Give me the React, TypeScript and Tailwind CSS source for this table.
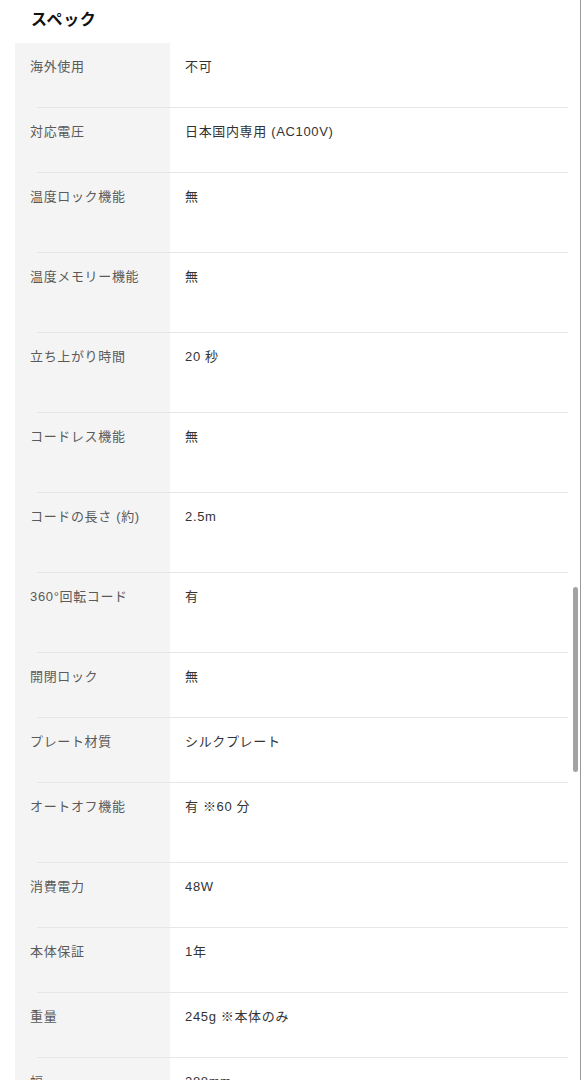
const specs: { label: string; value: string; tall?: boolean }[] = [
  { label: "海外使用", value: "不可" },
  { label: "対応電圧", value: "日本国内専用 (AC100V)" },
  { label: "温度ロック機能", value: "無", tall: true },
  { label: "温度メモリー機能", value: "無", tall: true },
  { label: "立ち上がり時間", value: "20 秒", tall: true },
  { label: "コードレス機能", value: "無", tall: true },
  { label: "コードの長さ (約)", value: "2.5m", tall: true },
  { label: "360°回転コード", value: "有", tall: true },
  { label: "開閉ロック", value: "無" },
  { label: "プレート材質", value: "シルクプレート" },
  { label: "オートオフ機能", value: "有 ※60 分", tall: true },
  { label: "消費電力", value: "48W" },
  { label: "本体保証", value: "1年" },
  { label: "重量", value: "245g ※本体のみ" },
  { label: "幅", value: "288mm" },
];

export default function App() {
  return (
    <div
      className="relative w-[581px] h-[1080px] overflow-hidden bg-white border-r border-[#9a9a9a]"
      style={{ fontFamily: '"Liberation Sans", "Noto Sans CJK JP", sans-serif' }}
    >
      {/* タイトル */}
      <h2 className="pl-[31px] pt-[10px] h-[43px] text-[16px] leading-[20px] font-bold text-[#111] tracking-[0.04em]">
        スペック
      </h2>

      {/* スペック表 */}
      <div className="ml-[15px] w-[553px] flex flex-col">
        {specs.map((s, i) => (
          <div key={s.label}>
            {i > 0 && (
              <div className="flex h-px">
                <div className="w-[22px] bg-[#f4f4f4]" />
                <div className="flex-1 bg-[#e6e6e6]" />
              </div>
            )}
            <div className={`flex ${s.tall ? "h-[79px]" : "h-[64px]"}`}>
              <div className="w-[155px] shrink-0 bg-[#f4f4f4] pl-[15px] pt-[14px] text-[13px] leading-[20px] tracking-[0.05em] text-[#5a5a5a]">
                {s.label}
              </div>
              <div className="flex-1 pl-[15px] pt-[14px] text-[13px] leading-[20px] tracking-[0.05em] text-[#333]">
                {s.value}
              </div>
            </div>
          </div>
        ))}
      </div>

      {/* スクロールバー */}
      <div className="absolute left-[573px] top-[587px] w-[5px] h-[185px] rounded-full bg-[#a3a3a3]" />
    </div>
  );
}
